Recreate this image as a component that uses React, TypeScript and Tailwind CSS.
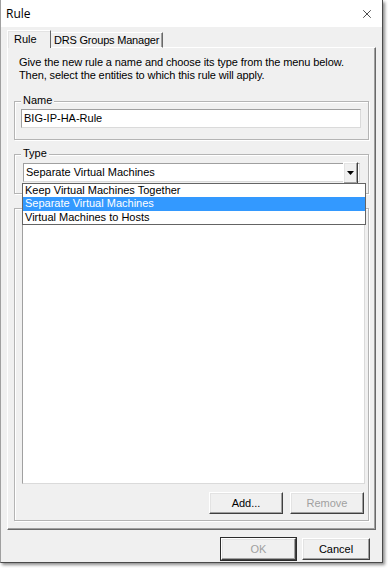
import { X } from 'lucide-react';

const btn =
  'h-[22px] flex items-center justify-center bg-[#f0f0f0] border border-t-white border-l-white border-r-[#404040] border-b-[#404040] shadow-[inset_-1px_-1px_0_#a0a0a0,inset_1px_1px_0_#e3e3e3]';

const GroupBox = ({ label, className, children }: { label?: string; className?: string; children?: React.ReactNode }) => (
  <div className={`relative mx-[6px] border border-[#b4b4b4] shadow-[1px_1px_0_#fff,inset_1px_1px_0_#fff] ${className ?? ''}`}>
    {label && (
      <span className="absolute left-[6px] top-[-8px] bg-[#f0f0f0] px-[2px] leading-[13px]">{label}</span>
    )}
    {children}
  </div>
);

const App = () => {
  const options = ['Keep Virtual Machines Together', 'Separate Virtual Machines', 'Virtual Machines to Hosts'];

  return (
    <div className="w-[388px] h-[568px] bg-white" style={{ fontFamily: '"Liberation Sans", Arial, sans-serif' }}>
      <div className="relative w-[383px] h-[563px] flex flex-col bg-[#f0f0f0] border-l border-l-[#a0a0a0] border-r border-r-[#4a4a4a] border-b border-b-[#4a4a4a] shadow-[2px_2px_3px_rgba(0,0,0,0.45)] text-[11px] text-black">
        {/* Title bar */}
        <div className="h-[27px] bg-white flex items-center justify-between pl-[5px] pr-[8px] shrink-0">
          <span className="text-[12px]" style={{ fontFamily: '"Open Sans", "Noto Sans", sans-serif' }}>Rule</span>
          <X size={14} strokeWidth={1.2} />
        </div>

        <div className="flex flex-col px-[6px] pt-[3px]">
          {/* Tabs */}
          <div className="flex items-end h-[18px] relative z-10 whitespace-nowrap">
            <div className="w-[44px] h-[18px] bg-[#f0f0f0] border-t border-l border-t-white border-l-white border-r border-r-[#696969] pl-[6px] pt-[2px] leading-[13px] shadow-[inset_1px_1px_0_#e3e3e3]">
              Rule
            </div>
            <div className="w-[112px] h-[16px] border-t border-t-white border-r border-r-[#696969] shadow-[inset_-1px_0_0_#a0a0a0] border-b border-b-white pl-[3px] pt-[1px] leading-[13px] tracking-[-0.2px]">
              DRS Groups Manager
            </div>
          </div>

          {/* Tab panel */}
          <div className="relative h-[483px] -mt-[1px] border border-t-white border-l-white border-r-[#696969] border-b-[#696969] shadow-[inset_-1px_-1px_0_#a0a0a0] flex flex-col pt-[8px]">
            <p className="pl-[11px] leading-[13px] tracking-[-0.1px]">
              Give the new rule a name and choose its type from the menu below.
              <br />
              Then, select the entities to which this rule will apply.
            </p>

            <GroupBox label="Name" className="mt-[19px] h-[39px] pt-[7px] pl-[6px] pr-[7px]">
              <div className="h-[19px] bg-white border border-t-[#a0a0a0] border-l-[#a0a0a0] border-r-[#dadada] border-b-[#dadada] flex items-center pl-[2px]">
                BIG-IP-HA-Rule
              </div>
            </GroupBox>

            <GroupBox label="Type" className="mt-[14px] h-[40px] pt-[8px] pl-[8px] pr-[8px]">
              <div className="h-[19px] bg-white border border-t-[#a0a0a0] border-l-[#a0a0a0] border-r-[#dadada] border-b-[#dadada] flex items-center pl-[2px]">
                <span className="flex-1">Separate Virtual Machines</span>
                <div className={`w-[15px] h-[15px] mr-[1px] ${btn}`}>
                  <svg width="7" height="4" viewBox="0 0 7 4">
                    <path d="M0 0h7L3.5 4z" fill="#000" />
                  </svg>
                </div>
              </div>
            </GroupBox>

            <GroupBox className="mt-[14px] h-[313px] pt-[13px] pl-[7px] pr-[3px] flex flex-col">
              <div className="h-[262px] bg-white border border-t-[#a0a0a0] border-l-[#a0a0a0] border-r-[#dadada] border-b-[#dadada]" />
              <div className="flex justify-end gap-[7px] mt-[8px] pr-[1px]">
                <div className={`w-[74px] ${btn}`}>Add...</div>
                <div className={`w-[74px] text-[#a0a0a0] ${btn}`}>Remove</div>
              </div>
            </GroupBox>

            {/* Open dropdown list */}
            <div className="absolute left-[14px] top-[135px] w-[344px] h-[42px] bg-white border border-[#646464] z-20 flex flex-col">
              {options.map((o) => (
                <div
                  key={o}
                  className={`h-[13.33px] leading-[13px] pl-[2px] ${o === 'Separate Virtual Machines' ? 'bg-[#3399ff] text-white' : ''}`}
                >
                  {o}
                </div>
              ))}
            </div>
          </div>

          {/* Footer buttons */}
          <div className="flex justify-end gap-[6px] mt-[8px] pr-[6px]">
            <div className={`w-[75px] text-[#a0a0a0] outline outline-1 outline-[#2b2b2b] ${btn}`}>OK</div>
            <div className={`w-[68px] ${btn}`}>Cancel</div>
          </div>
        </div>
      </div>
    </div>
  );
};

export default App;
